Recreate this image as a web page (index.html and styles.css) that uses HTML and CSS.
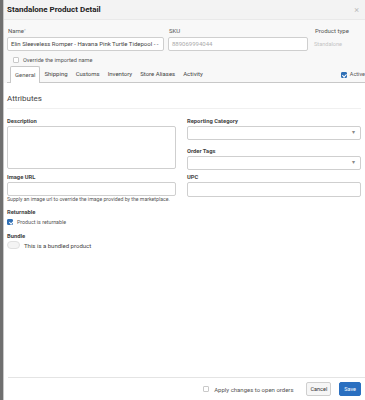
FILE: index.html
```html
<!DOCTYPE html>
<html lang="en">
<head>
    <meta charset="UTF-8">
    <meta name="viewport" content="width=device-width, initial-scale=1.0">
    <title>Standalone Product Detail</title>
    <link rel="stylesheet" href="styles.css">
</head>
<body>
    <div class="modal">
        <div class="modal-header">
            <h2 class="modal-title">Standalone Product Detail</h2>
            <span class="close-btn">×</span>
        </div>
        <div class="modal-top">
            <div class="top-row">
                <div class="field name-field">
                    <label class="top-label">Name<sup>*</sup></label>
                    <div class="text-input">Elin Sleeveless Romper - Havana Pink Turtle Tidepool - -</div>
                </div>
                <div class="field sku-field">
                    <label class="top-label">SKU</label>
                    <div class="text-input muted">889069994044</div>
                </div>
                <div class="field type-field">
                    <label class="top-label">Product type</label>
                    <div class="type-value">Standalone</div>
                </div>
            </div>
            <div class="check-row override">
                <span class="checkbox"></span>
                <span>Override the imported name</span>
            </div>
            <div class="tabs">
                <span class="tab active">General</span>
                <span class="tab">Shipping</span>
                <span class="tab">Customs</span>
                <span class="tab">Inventory</span>
                <span class="tab">Store Aliases</span>
                <span class="tab">Activity</span>
                <span class="active-toggle"><span class="checkbox checked"></span>Active</span>
            </div>
        </div>
        <div class="modal-body">
            <div class="section-title">Attributes</div>
            <div class="grid">
                <div class="col">
                    <label class="field-label">Description</label>
                    <div class="textarea"></div>
                    <label class="field-label">Image URL</label>
                    <div class="text-input plain"></div>
                    <div class="help">Supply an image url to override the image provided by the marketplace.</div>
                </div>
                <div class="col">
                    <label class="field-label">Reporting Category</label>
                    <div class="select"><span class="caret">▾</span></div>
                    <label class="field-label">Order Tags</label>
                    <div class="select tags"><span class="caret">▾</span></div>
                    <label class="field-label">UPC</label>
                    <div class="text-input plain upc"></div>
                </div>
            </div>
            <label class="field-label returnable">Returnable</label>
            <div class="check-row option">
                <span class="checkbox checked"></span>
                <span>Product is returnable</span>
            </div>
            <label class="field-label bundle">Bundle</label>
            <div class="check-row option bundle-row">
                <span class="switch"></span>
                <span class="switch-text">This is a bundled product</span>
            </div>
        </div>
        <div class="modal-footer">
            <span class="check-row footer-check"><span class="checkbox"></span>Apply changes to open orders</span>
            <button class="btn cancel-btn">Cancel</button>
            <button class="btn save-btn">Save</button>
        </div>
    </div>
</body>
</html>
```

FILE: styles.css
```css
body {
    margin: 0;
    background-color: #6f6f6f;
    font-family: Roboto, "Liberation Sans", sans-serif;
    color: #333;
}
.modal {
    margin-left: 3px;
    height: 400px;
    background-color: #fff;
    display: flex;
    flex-direction: column;
    border-left: 1px solid #c8c8c8;
}
.modal-header {
    height: 20px;
    display: flex;
    align-items: center;
    justify-content: space-between;
    padding: 0 6px 0 3px;
    background-color: #f3f3f3;
    border-bottom: 1px solid #e9e9e9;
    box-sizing: border-box;
}
.modal-title {
    margin: 0;
    font-size: 8px;
    font-weight: bold;
    color: #222;
}
.close-btn {
    font-size: 9px;
    color: #bbb;
}
.modal-top {
    background-color: #f8f8f8;
    padding: 7px 0 0 3px;
}
.top-row {
    display: flex;
    gap: 4px;
    padding-right: 4px;
}
.field {
    display: flex;
    flex-direction: column;
}
.name-field { width: 157px; }
.sku-field { width: 140px; }
.type-field { flex: 1; padding-left: 2px; }
.top-label {
    font-size: 6px;
    color: #555;
    height: 10px;
    line-height: 8px;
    padding-left: 1px;
}
.top-label sup {
    font-size: 4px;
    color: #999;
    vertical-align: top;
}
.text-input {
    height: 14px;
    box-sizing: border-box;
    border: 1px solid #cfcfcf;
    border-radius: 2px;
    background-color: #fff;
    font-size: 6px;
    line-height: 12px;
    padding: 0 3px;
    color: #444;
    white-space: nowrap;
    overflow: hidden;
}
.text-input.muted { color: #aaa; }
.type-value {
    font-size: 5.6px;
    color: #c4c4c4;
    line-height: 14px;
}
.check-row {
    display: flex;
    align-items: center;
    gap: 4px;
    font-size: 5.6px;
    color: #555;
}
.override {
    margin: 5px 0 0 6px;
    height: 8px;
}
.checkbox {
    width: 6px;
    height: 6px;
    border: 1px solid #c9c9c9;
    border-radius: 1px;
    background-color: #fff;
    display: inline-block;
    box-sizing: border-box;
    position: relative;
    flex-shrink: 0;
}
.checkbox.checked {
    background-color: #2f6fb5;
    border-color: #2f6fb5;
}
.checkbox.checked::after {
    content: "";
    position: absolute;
    left: 1.5px;
    top: 0.2px;
    width: 1.5px;
    height: 3px;
    border: solid #fff;
    border-width: 0 1px 1px 0;
    transform: rotate(45deg);
}
.tabs {
    display: flex;
    align-items: flex-end;
    margin-top: 2px;
    height: 16px;
    border-bottom: 1px solid #c8c8c8;
    font-size: 6px;
    color: #444;
    padding-left: 3px;
}
.tab {
    padding: 0 4px;
    line-height: 15px;
    height: 16px;
    box-sizing: border-box;
}
.tab.active {
    background-color: #fff;
    border: 1px solid #c8c8c8;
    border-bottom: none;
    border-radius: 2px 2px 0 0;
    height: 17px;
    margin-bottom: -1px;
    color: #555;
    padding: 0 4px;
}
.active-toggle {
    margin-left: auto;
    display: flex;
    align-items: center;
    gap: 3px;
    line-height: 15px;
    font-size: 5.5px;
    color: #555;
}
.active-toggle .checkbox { margin-top: 1px; }
.modal-body {
    flex: 1;
    padding: 0 4px 0 3px;
}
.section-title {
    font-size: 8px;
    color: #444;
    line-height: 10px;
    padding-top: 11px;
    height: 14px;
    border-bottom: 1px solid #f0f0f0;
    margin-bottom: 8px;
}
.grid {
    display: grid;
    grid-template-columns: 169px 1fr;
    gap: 11px;
}
.col {
    display: flex;
    flex-direction: column;
}
.field-label {
    display: block;
    font-size: 5.8px;
    font-weight: bold;
    color: #444;
    line-height: 8px;
    margin-bottom: 1px;
}
.textarea {
    height: 43px;
    box-sizing: border-box;
    border: 1px solid #cfcfcf;
    border-radius: 2px;
    margin-bottom: 4px;
}
.select {
    height: 14px;
    box-sizing: border-box;
    border: 1px solid #cfcfcf;
    border-radius: 2px;
    position: relative;
    margin-bottom: 7px;
}
.select.tags { margin-bottom: 3px; }
.caret {
    position: absolute;
    right: 5px;
    top: 1px;
    font-size: 6px;
    color: #888;
}
.text-input.upc { height: 15px; }
.help {
    font-size: 5.2px;
    color: #555;
    line-height: 6px;
    white-space: nowrap;
}
.field-label.returnable { margin-top: 6px; }
.field-label.bundle { margin-top: 5px; }
.option {
    height: 10px;
    font-size: 5.3px;
}
.bundle-row {
    height: 8px;
    gap: 4px;
}
.switch {
    width: 11px;
    height: 6px;
    border: 1px solid #e0e0e0;
    border-radius: 4px;
    background-color: #f4f4f4;
    display: inline-block;
}
.switch-text {
    font-size: 6px;
    color: #444;
}
.modal-footer {
    margin-left: 4px;
    height: 22px;
    border-top: 1px solid #e4e4e4;
    display: flex;
    align-items: center;
    justify-content: flex-end;
    padding-right: 4px;
    gap: 8px;
}
.footer-check {
    gap: 5px;
    margin-right: 5px;
    font-size: 6px;
}
.btn {
    font-family: Roboto, "Liberation Sans", sans-serif;
    font-size: 5.5px;
    height: 14px;
    padding: 0 3px;
    border-radius: 2px;
    cursor: pointer;
}
.cancel-btn {
    background-color: #f6f6f6;
    border: 1px solid #cfcfcf;
    color: #333;
}
.save-btn {
    background-color: #2a6fc0;
    border: 1px solid #2a6fc0;
    color: #fff;
    padding: 0 4px;
}
```
